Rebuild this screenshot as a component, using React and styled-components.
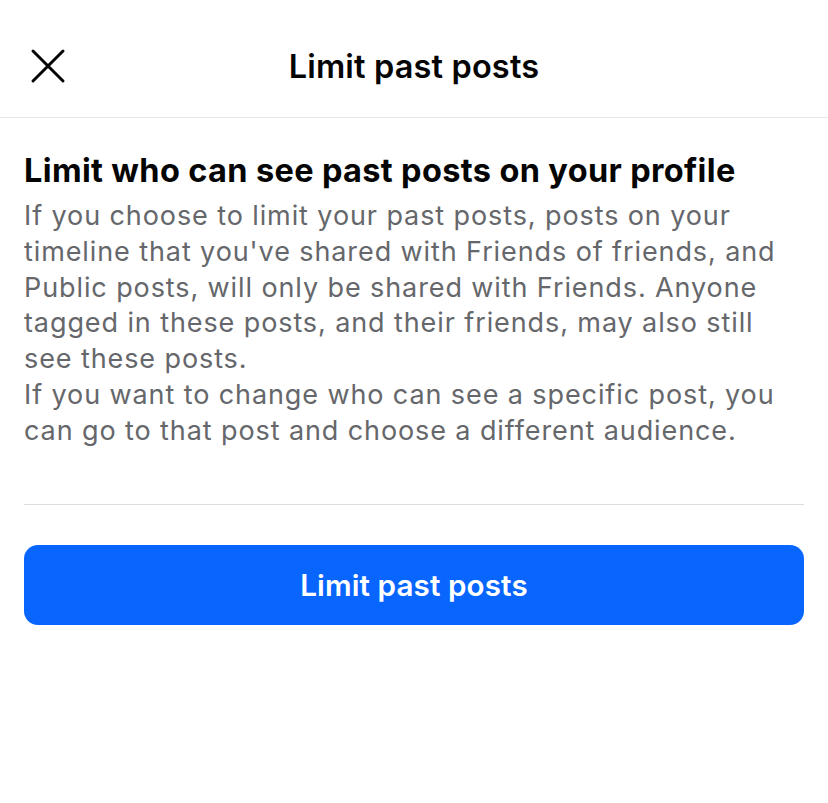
import React from "react"
import styled, { createGlobalStyle } from "styled-components"

const GlobalStyle = createGlobalStyle`
  html, body {
    margin: 0;
    padding: 0;
    background: #ffffff;
    font-family: Inter, "Noto Sans", sans-serif;
    -webkit-font-smoothing: antialiased;
  }
`

const Screen = styled.main`
  width: 828px;
  min-height: 803px;
  background: #ffffff;
`

const TopBar = styled.header`
  position: relative;
  height: 118px;
  display: flex;
  align-items: center;
  justify-content: center;
  border-bottom: 1px solid #e4e6eb;
  box-sizing: border-box;
  padding-top: 16px;
`

const CloseButton = styled.button`
  position: absolute;
  left: 26px;
  top: 44px;
  width: 44px;
  height: 44px;
  padding: 0;
  border: 0;
  background: none;
  display: flex;
  align-items: center;
  justify-content: center;
`

const Title = styled.h1`
  margin: 0;
  font-size: 32.5px;
  font-weight: 600;
  color: #050505;
  letter-spacing: 0.15px;
`

const Content = styled.section`
  padding: 33px 24px 0;
`

const Heading = styled.h2`
  margin: 0;
  font-size: 32.5px;
  line-height: 40px;
  font-weight: 700;
  color: #050505;
  letter-spacing: 0.35px;
`

const Body = styled.p`
  margin: 0;
  font-size: 27px;
  line-height: 35.8px;
  color: #65676b;
  letter-spacing: 0.9px;
`

const Intro = styled(Body)`
  margin-top: 7px;
`

const Divider = styled.hr`
  margin: 55px 0 0;
  border: 0;
  border-top: 1px solid #dadde1;
`

const PrimaryButton = styled.button`
  display: block;
  width: 100%;
  height: 80px;
  margin-top: 40px;
  border: 0;
  border-radius: 14px;
  background: #0866ff;
  color: #ffffff;
  font-family: inherit;
  font-size: 29.6px;
  font-weight: 600;
  letter-spacing: 0.1px;
`

const CloseIcon = () => (
  <svg width="36" height="36" viewBox="0 0 36 36" fill="none">
    <path d="M3 3 L33 33 M33 3 L3 33" stroke="#050505" strokeWidth="3" strokeLinecap="round" />
  </svg>
)

export default function App() {
  return (
    <>
      <GlobalStyle />
      <Screen>
        <TopBar>
          <CloseButton aria-label="Close">
            <CloseIcon />
          </CloseButton>
          <Title>Limit past posts</Title>
        </TopBar>
        <Content>
          <Heading>Limit who can see past posts on your profile</Heading>
          <Intro>
            If you choose to limit your past posts, posts on your timeline that you've shared with Friends of friends, and Public posts, will only be shared with Friends. Anyone tagged in these posts, and their friends, may also still see these posts.
          </Intro>
          <Body>
            If you want to change who can see a specific post, you can go to that post and choose a different audience.
          </Body>
          <Divider />
          <PrimaryButton>Limit past posts</PrimaryButton>
        </Content>
      </Screen>
    </>
  )
}
